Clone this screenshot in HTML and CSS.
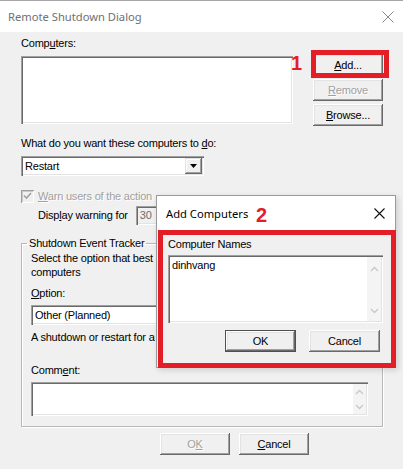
FILE: index.html
```html
<!DOCTYPE html>
<html>
<head>
<meta charset="utf-8">
<link rel="stylesheet" href="styles.css">
</head>
<body>
<div class="win">
  <div class="titlebar">
    <span class="title">Remote Shutdown Dialog</span>
    <svg class="close" width="12" height="12" viewBox="0 0 12 12"><path d="M0.5 0.5L11.5 11.5M11.5 0.5L0.5 11.5" stroke="#8a8a8a" stroke-width="1" fill="none"/></svg>
  </div>
  <div class="body">
    <div class="computers">
      <div class="col-left">
        <div class="label">Comp<u>u</u>ters:</div>
        <div class="field listbox"></div>
      </div>
      <div class="col-buttons">
        <div class="btn"><u>A</u>dd...</div>
        <div class="btn disabled"><u>R</u>emove</div>
        <div class="btn"><u>B</u>rowse...</div>
      </div>
    </div>
    <div class="label q">What do you want these computers to <u>d</u>o:</div>
    <div class="field combo combo-action"><span class="combo-text">Restart</span><span class="drop"><svg width="7" height="4" viewBox="0 0 7 4"><path d="M0 0H7L3.5 4Z" fill="#000"/></svg></span></div>
    <div class="check-row">
      <span class="checkbox"><svg width="9" height="8" viewBox="0 0 9 8"><path d="M1 3.5L3.5 6L8 1" stroke="#a0a0a0" stroke-width="1.6" fill="none"/></svg></span>
      <span class="disabled-text"><u>W</u>arn users of the action</span>
    </div>
    <div class="warn-row">
      <span>Disp<u>l</u>ay warning for</span>
      <span class="field spin">30</span>
    </div>
    <fieldset class="group">
      <legend>Shutdown Event Tracker</legend>
      <div class="para">Select the option that best describes why you want to shut down these<br>computers</div>
      <div class="label opt"><u>O</u>ption:</div>
      <div class="field combo combo-option"><span class="combo-text">Other (Planned)</span></div>
      <div class="desc">A shutdown or restart for an unknown reason</div>
      <div class="label cmt">Comm<u>e</u>nt:</div>
      <div class="field comment">
        <span class="scroll">
          <svg width="9" height="6" viewBox="0 0 9 6"><path d="M1 5L4.5 1.5L8 5" stroke="#c8c8c8" stroke-width="1.3" fill="none"/></svg>
          <svg width="9" height="6" viewBox="0 0 9 6"><path d="M1 1L4.5 4.5L8 1" stroke="#c8c8c8" stroke-width="1.3" fill="none"/></svg>
        </span>
      </div>
    </fieldset>
    <div class="footer">
      <div class="btn disabled">O<u>K</u></div>
      <div class="btn"><u>C</u>ancel</div>
    </div>
  </div>

  <div class="mark mark1"></div>
  <div class="num num1">1</div>

  <div class="popup">
    <div class="ptitle">
      <span class="ptitle-text">Add Computers</span>
      <svg class="pclose" width="11" height="11" viewBox="0 0 11 11"><path d="M0.5 0.5L10.5 10.5M10.5 0.5L0.5 10.5" stroke="#111" stroke-width="1.1" fill="none"/></svg>
    </div>
    <div class="pbody">
      <div class="label">Computer Names</div>
      <div class="field names">
        <span class="names-text">dinhvang</span>
        <span class="scroll">
          <svg width="9" height="6" viewBox="0 0 9 6"><path d="M1 5L4.5 1.5L8 5" stroke="#c8c8c8" stroke-width="1.3" fill="none"/></svg>
          <svg width="9" height="6" viewBox="0 0 9 6"><path d="M1 1L4.5 4.5L8 1" stroke="#c8c8c8" stroke-width="1.3" fill="none"/></svg>
        </span>
      </div>
      <div class="pbuttons">
        <div class="btn default">OK</div>
        <div class="btn">Cancel</div>
      </div>
    </div>
  </div>
  <div class="mark mark2"></div>
  <div class="num num2">2</div>
</div>
</body>
</html>
```

FILE: styles.css
```css
* { box-sizing: border-box; }
html, body { margin: 0; padding: 0; }
body {
  width: 403px;
  height: 469px;
  overflow: hidden;
  background: #f0f0f0;
  font-family: "Liberation Sans", Arial, sans-serif;
  font-size: 11px;
  letter-spacing: -0.2px;
  color: #000;
}
u { text-decoration: underline; text-underline-offset: 1px; }
.win { position: relative; height: 469px; }

.titlebar {
  height: 32px;
  border-top: 1px solid #a6a6a6;
  background: #fff;
  display: flex;
  align-items: center;
  justify-content: space-between;
  padding: 0 9px 0 8px;
}
.title { font-family: "Noto Sans", sans-serif; font-size: 11.2px; letter-spacing: 0; color: #707070; }

.body { padding: 5px 0 0 21px; }
.label { line-height: 13px; height: 13px; white-space: nowrap; }

.field {
  background: #fff;
  box-shadow: inset 1px 1px #a0a0a0, inset 2px 2px #696969, inset -1px -1px #fff, inset -2px -2px #e3e3e3;
}

.computers { display: flex; }
.col-left { width: 272px; }
.listbox { margin-top: 6px; height: 68px; }
.col-buttons {
  margin-left: 20px;
  width: 70px;
  padding-top: 17px;
  display: flex;
  flex-direction: column;
  gap: 3px;
}
.btn {
  height: 22px;
  display: flex;
  align-items: center;
  justify-content: center;
  background: #f0f0f0;
  box-shadow: inset -1px -1px #696969, inset 1px 1px #fff, inset -2px -2px #a0a0a0, inset 2px 2px #e3e3e3;
  white-space: nowrap;
}
.btn.disabled, .disabled-text { color: #a0a0a0; text-shadow: 1px 1px #fff; }
.btn.default {
  box-shadow: inset 0 0 0 1px #505050, inset -2px -2px #696969, inset 2px 2px #fff, inset -3px -3px #a0a0a0, inset 3px 3px #e3e3e3;
}

.q { margin-top: 11px; }
.combo {
  margin-top: 6px;
  height: 20px;
  display: flex;
  align-items: center;
  padding: 0 2px 0 4px;
}
.combo-action { width: 183px; }
.combo-text { flex: 1; }
.drop {
  width: 17px;
  height: 16px;
  display: flex;
  align-items: center;
  justify-content: center;
  background: #f0f0f0;
  box-shadow: inset -1px -1px #696969, inset 1px 1px #e3e3e3, inset -2px -2px #a0a0a0, inset 2px 2px #fff;
}

.check-row {
  margin-top: 13px;
  height: 14px;
  display: flex;
  align-items: center;
  gap: 4px;
}
.checkbox {
  width: 13px;
  height: 13px;
  display: flex;
  align-items: center;
  justify-content: center;
  background: #f0f0f0;
  box-shadow: inset 1px 1px #a0a0a0, inset -1px -1px #fff, inset 2px 2px #c8c8c8;
}
.warn-row {
  margin-top: 2px;
  padding-left: 17px;
  height: 20px;
  display: flex;
  align-items: center;
  gap: 8px;
}
.spin {
  width: 44px;
  height: 19px;
  background: #f0f0f0;
  display: flex;
  align-items: center;
  padding-left: 4px;
  color: #6d6d6d;
}

.group {
  margin: 12px 0 0 0;
  width: 362px;
  border: 1px solid #b8b8b8;
  box-shadow: inset 1px 1px #fff, 1px 1px #fff;
  padding: 0 14px 10px 9px;
  min-width: 0;
}
.group legend {
  padding: 0 2px;
  margin-left: -4px;
  line-height: 13px;
}
.para { margin-top: 1px; line-height: 14px; white-space: nowrap; width: 124px; overflow: hidden; }
.opt { margin-top: 8px; }
.combo-option { margin-top: 5px; width: 337px; }
.desc { margin-top: 6px; line-height: 13px; white-space: nowrap; width: 124px; overflow: hidden; }
.cmt { margin-top: 20px; }
.comment {
  margin-top: 5px;
  height: 34px;
  width: 337px;
  display: flex;
  justify-content: flex-end;
  padding: 2px;
}
.scroll {
  width: 13px;
  background: #f4f4f4;
  display: flex;
  flex-direction: column;
  justify-content: space-between;
  align-items: center;
  padding: 5px 0 4px;
}

.footer {
  margin-top: 6px;
  padding-left: 139px;
  display: flex;
  gap: 9px;
}
.footer .btn { width: 70px; }

.mark {
  position: absolute;
  border: 5px solid #e31e27;
}
.mark1 { left: 311px; top: 50px; width: 78px; height: 28px; }
.mark2 { left: 158px; top: 230px; width: 238px; height: 138px; }
.num {
  position: absolute;
  font-family: "Liberation Sans", Arial, sans-serif;
  font-weight: bold;
  font-size: 20px;
  line-height: 20px;
  letter-spacing: 0;
  color: #e31e27;
}
.num1 { left: 291px; top: 53px; }
.num2 { left: 256px; top: 205px; }

.popup {
  position: absolute;
  left: 156px;
  top: 195px;
  width: 240px;
  height: 173px;
  border: 1px solid #9a9a9a;
  background: #f0f0f0;
  box-shadow: 2px 2px 6px rgba(0,0,0,0.15);
}
.ptitle {
  height: 34px;
  background: #fff;
  display: flex;
  align-items: center;
  justify-content: space-between;
  padding: 0 10px 0 9px;
}
.ptitle-text { font-family: "Noto Sans", sans-serif; font-size: 11.2px; letter-spacing: 0; color: #000; }
.pbody { padding: 8px 0 0 11px; }
.names {
  margin-top: 4px;
  width: 215px;
  height: 68px;
  display: flex;
  padding: 2px;
}
.names-text { flex: 1; padding: 2px 0 0 2px; line-height: 13px; }
.names .scroll { width: 14px; padding: 9px 0 7px; }
.pbuttons {
  margin-top: 7px;
  width: 212px;
  display: flex;
  justify-content: flex-end;
  gap: 13px;
}
.pbuttons .btn { width: 71px; }
```
